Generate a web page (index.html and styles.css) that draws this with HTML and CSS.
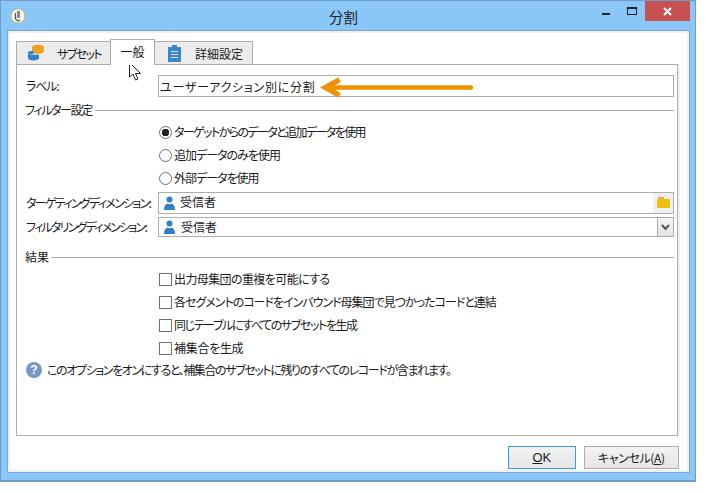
FILE: index.html
```html
<!DOCTYPE html>
<html lang="ja">
<head>
<meta charset="utf-8">
<title>分割</title>
<link rel="stylesheet" href="styles.css">
</head>
<body>
<div class="window">
  <div class="titlebar">
    <svg class="app-icon" width="16" height="16" viewBox="0 0 16 16"><circle cx="8" cy="8" r="7.2" fill="#f4f4ee" stroke="#9fc46a"/><path d="M7 3h3v7H7z" fill="#8a8a8a"/><path d="M5.5 5v6l2.500 2 2-1" fill="none" stroke="#555" stroke-width="1.200"/></svg>
    <div class="title">分割</div>
    <div class="caption">
      <span class="cap-btn"><span class="min-glyph"></span></span>
      <span class="cap-btn cap-max"><span class="max-glyph"></span></span>
      <span class="cap-close"><svg width="9" height="9" viewBox="0 0 9 9"><path d="M1 1l7 7M8 1L1 8" stroke="#fff" stroke-width="2"/></svg></span>
    </div>
  </div>
  <div class="client">
    <div class="tabs">
      <div class="tab tab-first">
        <svg class="tab-db" width="18" height="18" viewBox="0 0 18 18"><ellipse cx="11" cy="4.500" rx="6" ry="2.700" fill="#f0a01e"/><path d="M5 4.500v3.500c0 1.500 2.700 2.700 6 2.700s6-1.200 6-2.700V4.500c0 1.500-2.700 2.700-6 2.700S5 6 5 4.500z" fill="#f0a01e"/><path d="M1 10v5c0 1.500 2.500 2.500 5.500 2.500S12 16.500 12 15v-3.500c-4 .5-9 .5-11-1.500z" fill="#2f80c8"/><ellipse cx="4" cy="9.500" rx="3" ry="1.500" fill="#2f80c8"/></svg>
        <span class="ls-16">サブセット</span>
      </div>
      <div class="tab tab-active"><span>一般</span></div>
      <div class="tab tab-third">
        <svg width="13" height="17" viewBox="0 0 13 17"><path d="M0 2h4V0h5v2h4v15H0z" fill="#3a85cc"/><path d="M3 6h7v1H3zM3 9h7v1H3zM3 12h7v1H3z" fill="#d6e6f5"/></svg>
        <span>詳細設定</span>
      </div>
    </div>
    <div class="panel">
      <div class="row row-label">
        <label class="lbl ls-12">ラベル:</label>
        <div class="field field-text">ユーザーアクション別に分割</div>
      </div>
      <div class="section sec-filter"><span class="txt ls-14">フィルター設定</span><i class="rule"></i></div>
      <div class="options">
        <div class="opt"><span class="radio radio-on"></span><span class="txt ls-16">ターゲットからのデータと追加データを使用</span></div>
        <div class="opt"><span class="radio"></span><span class="txt ls-10">追加データのみを使用</span></div>
        <div class="opt"><span class="radio"></span><span class="txt ls-10">外部データを使用</span></div>
      </div>
      <div class="row row-dim">
        <label class="lbl ls-17">ターゲティングディメンション:</label>
        <div class="field field-pick">
          <svg class="person" width="11" height="14" viewBox="0 0 11 14"><circle cx="5.500" cy="3.500" r="3" fill="#2f80c8"/><path d="M0 14c0-4 1.500-6 3.500-6.500 1 1 3 1 4 0C9.500 8 11 10 11 14z" fill="#2f80c8"/></svg>
          <span class="val">受信者</span>
          <span class="folder-btn"><svg width="13" height="11" viewBox="0 0 13 11"><path d="M1 0h6v2H1z" fill="#eda73c"/><path d="M0 2h13v9H0z" fill="#f2bd0c"/></svg></span>
        </div>
      </div>
      <div class="row row-dim2">
        <label class="lbl ls-18">フィルタリングディメンション:</label>
        <div class="field field-pick field-combo">
          <svg class="person" width="11" height="14" viewBox="0 0 11 14"><circle cx="5.500" cy="3.500" r="3" fill="#2f80c8"/><path d="M0 14c0-4 1.500-6 3.500-6.500 1 1 3 1 4 0C9.500 8 11 10 11 14z" fill="#2f80c8"/></svg>
          <span class="val val2">受信者</span>
          <span class="combo-btn"><svg width="9" height="7" viewBox="0 0 9 7"><path d="M1 1l3.500 4L8 1" fill="none" stroke="#555" stroke-width="2"/></svg></span>
        </div>
      </div>
      <div class="section sec-result"><span class="txt">結果</span><i class="rule"></i></div>
      <div class="options">
        <div class="opt"><span class="check"></span><span class="txt ls-06">出力母集団の重複を可能にする</span></div>
        <div class="opt"><span class="check"></span><span class="txt ls-10">各セグメントのコードをインバウンド母集団で見つかったコードと連結</span></div>
        <div class="opt"><span class="check"></span><span class="txt ls-14">同じテーブルにすべてのサブセットを生成</span></div>
        <div class="opt"><span class="check"></span><span class="txt ls-03">補集合を生成</span></div>
      </div>
      <div class="help"><span class="help-icon">?</span><span class="txt ls-138">このオプションをオンにすると、補集合のサブセットに残りのすべてのレコードが含まれます。</span></div>
    </div>
    <div class="footer">
      <button class="btn btn-ok"><u>O</u>K</button>
      <button class="btn btn-cancel">キャンセル(<u>A</u>)</button>
    </div>
  </div>
</div>
<svg class="arrow" width="154" height="21" viewBox="0 0 154 21"><path d="M0 10.500L18 .5l3 4-9 6 9 6-3 4z" fill="#ee9200"/><path d="M10 10.500h141" stroke="#ee9200" stroke-width="4.500" stroke-linecap="round"/></svg>
<svg class="cursor" width="13" height="19" viewBox="0 0 13 19"><path d="M.5.500v14.500l3.500-3 2.500 6 2.500-1-2.500-5.500H11.500z" fill="#fff" stroke="#222" stroke-width="1"/></svg>
</body>
</html>
```

FILE: styles.css
```css
* { box-sizing: border-box; }
html, body { margin: 0; padding: 0; background: #fff; }
body {
  width: 705px;
  height: 493px;
  overflow: hidden;
  position: relative;
  font-family: "Noto Sans CJK JP", "Liberation Sans", sans-serif;
  font-size: 12px;
  font-feature-settings: "palt";
  color: #1a1a1a;
}
.txt { padding-bottom: 2px; }
.ls-03 { letter-spacing: -0.3px; }
.ls-06 { letter-spacing: -0.6px; }
.ls-10 { letter-spacing: -1px; }
.ls-12 { letter-spacing: -1.2px; }
.ls-138 { letter-spacing: -1.38px; }
.ls-14 { letter-spacing: -1.4px; }
.ls-16 { letter-spacing: -1.6px; }
.ls-17 { letter-spacing: -1.7px; }
.ls-18 { letter-spacing: -1.8px; }
.window {
  width: 696px;
  height: 482px;
  background: #8bc6f9;
  border: 1px solid #6d9ccb;
  border-width: 1px 1px 2px 1px;
  display: flex;
  flex-direction: column;
  padding: 0 5px 7px 6px;
}
.titlebar {
  height: 29px;
  display: flex;
  align-items: flex-start;
  position: relative;
  flex: none;
}
.app-icon { margin: 7px 0 0 3px; }
.title {
  position: absolute;
  left: 322px;
  top: 6px;
  width: 30px;
  font-size: 14.500px;
  line-height: 20px;
  color: #222;
}
.caption { margin-left: auto; display: flex; }
.cap-btn {
  width: 27px;
  height: 20px;
  display: flex;
  align-items: center;
  justify-content: center;
}
.cap-max { width: 26px; }
.min-glyph { width: 8px; height: 2px; background: #222; margin-top: 6px; }
.max-glyph { width: 10px; height: 8px; border: 1px solid #222; border-top-width: 2px; }
.cap-close {
  width: 45px;
  height: 20px;
  background: #c75050;
  display: flex;
  align-items: center;
  justify-content: center;
}
.client {
  flex: 1;
  background: #fff;
  border: 1px solid #7aa6d2;
  box-shadow: inset 0 0 0 2px #f0f0f0;
  padding: 8px 10px 0 8px;
  display: flex;
  flex-direction: column;
}
.tabs { display: flex; align-items: flex-end; height: 25px; position: relative; z-index: 1; flex: none; }
.tab {
  height: 23px;
  background: #ececec;
  border: 1px solid #adadad;
  border-bottom: none;
  display: flex;
  align-items: center;
  padding-left: 11px;
  gap: 11px;
  width: 95px;
  font-size: 12px;
  white-space: nowrap;
}
.tab-first { padding-left: 10px; gap: 12px; }
.tab-db { margin-top: -2px; }
.tab-active {
  width: 45px;
  height: 26px;
  margin: 0 -1px -1px -1px;
  background: #fff;
  justify-content: center;
  padding: 0 0 2px 0;
  position: relative;
  z-index: 2;
}
.tab-third { width: 99px; padding-left: 13px; gap: 14px; }
.panel {
  width: 662px;
  height: 372px;
  border: 1px solid #adadad;
  box-shadow: 2px 0 0 #f0f0f0;
  padding: 10px 3px 0 8px;
  flex: none;
}
.row { display: flex; align-items: center; }
.row-label { height: 22px; }
.row-dim { height: 22px; margin-top: 2px; }
.row-dim2 { height: 20px; margin-top: 3px; }
.lbl { width: 133px; flex: none; white-space: nowrap; padding: 0 0 2px 1px; }
.field {
  width: 516px;
  height: 100%;
  border: 1px solid #adadad;
  background: #fff;
  display: flex;
  align-items: center;
}
.field-text { padding-left: 1px; letter-spacing: 0.75px; }
.field-pick { position: relative; padding-left: 5px; }
.person { flex: none; margin-bottom: 1px; }
.val { margin-left: 5px; padding-bottom: 3px; }
.val2 { margin-left: 6px; padding-bottom: 2px; }
.folder-btn {
  margin-left: auto;
  width: 20px;
  height: 100%;
  background: #f0f0f0;
  padding-bottom: 2px;
  display: flex;
  align-items: center;
  justify-content: center;
}
.combo-btn {
  margin-left: auto;
  width: 16px;
  height: 100%;
  background: linear-gradient(#f4f4f4, #e4e4e4);
  border-left: 1px solid #adadad;
  display: flex;
  align-items: center;
  justify-content: center;
}
.section { display: flex; align-items: center; gap: 3px; white-space: nowrap; }
.sec-filter { height: 18px; margin-top: 4px; }
.sec-result { height: 18px; margin-top: 11px; }
.rule { flex: 1; height: 1px; background: #a5a5a5; }
.options { padding-left: 134px; margin-top: 2px; }
.opt { height: 23px; display: flex; align-items: center; gap: 2px; white-space: nowrap; }
.radio {
  width: 13px;
  height: 13px;
  border: 1px solid #707070;
  border-radius: 50%;
  background: #fff;
  flex: none;
}
.radio-on { background: radial-gradient(circle, #222 0, #222 3.500px, #fff 4px); }
.check {
  width: 13px;
  height: 13px;
  border: 1px solid #707070;
  background: #fff;
  flex: none;
}
.help { display: flex; align-items: center; gap: 5px; height: 18px; margin-top: 1px; padding-left: 1px; white-space: nowrap; }
.help-icon {
  width: 16px;
  height: 16px;
  border-radius: 50%;
  background: #7698c8;
  color: #fff;
  font: bold 12px/16px "Liberation Sans", sans-serif;
  text-align: center;
  flex: none;
}
.footer { display: flex; gap: 8px; padding: 10px 0 0 492px; }
.btn {
  height: 23px;
  font-family: inherit;
  font-size: 12px;
  font-feature-settings: "palt";
  letter-spacing: -0.4px;
  color: #1a1a1a;
  background: linear-gradient(#f2f2f2, #e6e6e6);
  border: 1px solid #adadad;
  padding: 0;
}
.btn-ok { width: 68px; border: 1px solid #3c9be6; font-family: "Liberation Sans", sans-serif; font-size: 13px; letter-spacing: 0; }
.btn-cancel { width: 96px; }
.arrow { position: absolute; left: 320px; top: 77px; }
.cursor { position: absolute; left: 129px; top: 62px; }
```
